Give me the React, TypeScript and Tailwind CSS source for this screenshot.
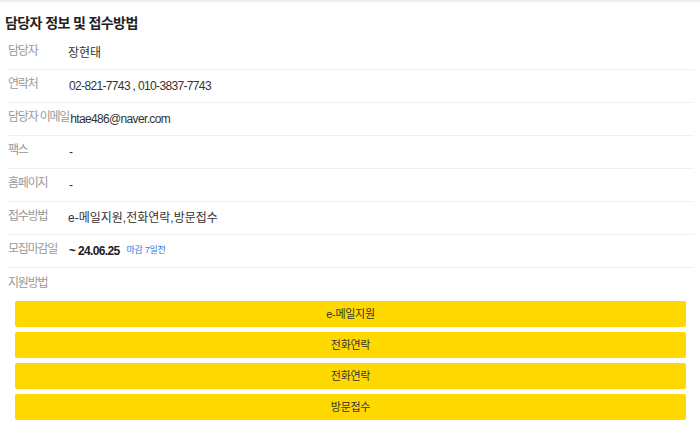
const rows: { label: string; value: React.ReactNode; ko?: boolean }[] = [
  { label: '담당자', value: '장현태', ko: true },
  { label: '연락처', value: '02-821-7743 , 010-3837-7743' },
  { label: '담당자 이메일', value: 'htae486@naver.com' },
  { label: '팩스', value: '-' },
  { label: '홈페이지', value: '-' },
  { label: '접수방법', value: 'e-메일지원,전화연락,방문접수', ko: true },
  {
    label: '모집마감일',
    value: (
      <>
        <span className="font-bold text-[#222]">~ 24.06.25</span>
        <span className="ml-[7px] text-[9px] tracking-[-0.3px] text-[#2a7ae2]">마감 7일전</span>
      </>
    ),
  },
];

const methods = ['e-메일지원', '전화연락', '전화연락', '방문접수'];

export default function App() {
  return (
    <main
      className="h-[446px] w-[700px] overflow-hidden border-t-2 border-[#eeeeee] bg-white text-[#333]"
      style={{ fontFamily: '"Liberation Sans", "Noto Sans CJK KR", sans-serif' }}
    >
      <h2 className="ml-[5px] mt-[11px] text-[14px] font-bold leading-[20px] tracking-[-0.6px] text-[#222]">
        담당자 정보 및 접수방법
      </h2>

      <div className="ml-[8px] mr-[6px] mt-[4px]">
        {rows.map((r, i) => (
          <div
            key={i}
            className="flex h-[33px] items-center border-b border-[#f0f0f0] text-[12px]"
          >
            <span className="min-w-[60px] shrink-0 whitespace-nowrap pb-[5px] text-[12px] tracking-[-1.2px] text-[#999]">
              {r.label}
            </span>
            <span
              className={
                r.ko
                  ? 'flex items-center whitespace-nowrap'
                  : 'ml-[1px] flex items-center whitespace-nowrap tracking-[-0.65px]'
              }
            >
              {r.value}
            </span>
          </div>
        ))}
        <div className="pt-[7px] text-[12px] leading-[16px] tracking-[-1.2px] text-[#999]">지원방법</div>
      </div>

      <div className="ml-[15px] mr-[14px] mt-[10px] flex flex-col gap-[5px]">
        {methods.map((m, i) => (
          <button
            key={i}
            type="button"
            className="flex h-[26px] items-center justify-center rounded-[2px] bg-[#ffd800] text-[11px] tracking-[-0.3px] text-[#333]"
          >
            {m}
          </button>
        ))}
      </div>
    </main>
  );
}
